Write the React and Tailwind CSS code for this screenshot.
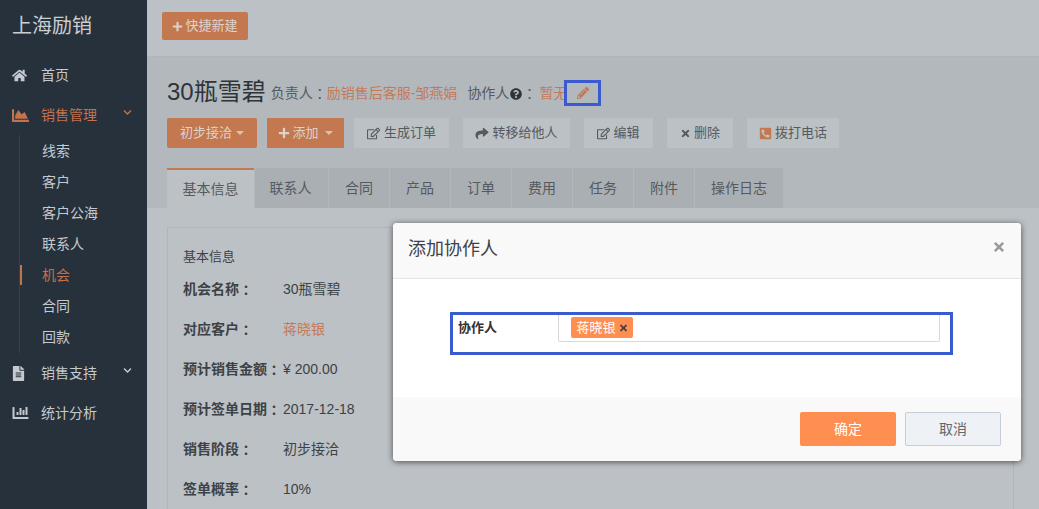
import {
  FaHome,
  FaChartArea,
  FaFileAlt,
  FaChartBar,
  FaPlus,
  FaPencilAlt,
  FaRegEdit,
  FaShare,
  FaTimes,
  FaQuestionCircle,
  FaPhoneSquareAlt,
  FaChevronDown,
} from "react-icons/fa";

const subItems = ["线索", "客户", "客户公海", "联系人", "机会", "合同", "回款"];

const tabs = [
  { name: "联系人", width: "w-[73px] pr-[2px]" },
  { name: "合同", width: "w-[60px]" },
  { name: "产品", width: "w-[60px]" },
  { name: "订单", width: "w-[60px]" },
  { name: "费用", width: "w-[60px]" },
  { name: "任务", width: "w-[60px]" },
  { name: "附件", width: "w-[60px]" },
  { name: "操作日志", width: "w-[88px]" },
];

const infoRows = [
  { label: "机会名称", value: "30瓶雪碧" },
  { label: "对应客户", value: "蒋晓银", link: true },
  { label: "预计销售金额", value: "¥ 200.00" },
  { label: "预计签单日期", value: "2017-12-18" },
  { label: "销售阶段", value: "初步接洽" },
  { label: "签单概率", value: "10%" },
];

// TC face draws the full-width colon centred, like the reference
const Colon = () => <span className="font-['Noto_Sans_CJK_TC',sans-serif]">：</span>;

const Caret = () => (
  <span className="ml-[4px] inline-block border-x-[4px] border-t-[4px] border-x-transparent border-t-[#d9c3b5]" />
);

const GrayButton = ({ width, gap = "gap-[3px]", icon, children }) => (
  <button className={`flex h-[30px] items-center justify-center bg-[#bcc1c5] text-[13px] text-[#555a5e] ${gap} ${width}`}>
    {icon}
    {children}
  </button>
);

const Sidebar = () => (
  <aside className="flex h-full w-[147px] shrink-0 flex-col bg-[#27313c] text-[14px] text-[#c5cad0]">
    <div className="flex h-[52px] items-center pl-[12px] text-[20px] text-[#c9ced3]">上海励销</div>
    <div className="mt-[3px] flex h-[40px] items-center pl-[12px]">
      <FaHome className="h-[15px] w-[15px]" />
      <span className="ml-[14px]">首页</span>
    </div>
    <div className="flex h-[40px] items-center pl-[12px] text-[#c2724c]">
      <FaChartArea className="h-[17px] w-[17px]" />
      <span className="ml-[12px]">销售管理</span>
      <FaChevronDown className="ml-[26px] mb-[6px] h-[9px] w-[9px]" />
    </div>
    <ul className="ml-[19px] border-l border-[#36414c] pt-[1px]">
      {subItems.map((item) => (
        <li
          key={item}
          className={`relative flex h-[31px] items-center pl-[22px] ${item === "机会" ? "text-[#c2724c]" : ""}`}
        >
          {item === "机会" && <span className="absolute left-0 top-[5px] h-[20px] w-[2px] bg-[#c2724c]" />}
          {item}
        </li>
      ))}
    </ul>
    <div className="flex h-[40px] items-center pl-[12px]">
      <FaFileAlt className="h-[15px] w-[13px]" />
      <span className="ml-[16px]">销售支持</span>
      <FaChevronDown className="ml-[26px] mb-[6px] h-[9px] w-[9px]" />
    </div>
    <div className="flex h-[40px] items-center pl-[12px]">
      <FaChartBar className="h-[16px] w-[17px]" />
      <span className="ml-[12px]">统计分析</span>
    </div>
  </aside>
);

const Main = () => (
  <main className="h-full min-w-0 flex-1 bg-[#bcc1c5]">
    <div className="flex h-[57px] items-start border-b border-[#b0b5b9] pl-[15px] pt-[12px]">
      <button className="flex h-[28px] w-[86px] items-center justify-center gap-[2px] rounded-[2px] bg-[#c3784f] text-[13px] text-[#dcd3cb]">
        <FaPlus className="h-[11px] w-[11px]" />
        快捷新建
      </button>
    </div>

    <div className="h-[151px] bg-[#b3b8bc] pl-[20px]">
      <div className="relative flex h-[61px] items-center pt-[8px] text-[#555a5e]">
        <span className="text-[24px] text-[#2f3438]">30瓶雪碧</span>
        <span className="ml-[5px] mt-[4px] flex text-[14px]">
          负责人
          <Colon />
        </span>
        <span className="mt-[4px] text-[14px] text-[#c47a58]">励销售后客服-邹燕娟</span>
        <span className="ml-[10px] mt-[4px] flex items-center text-[14px]">
          协作人
          <FaQuestionCircle className="ml-[1px] h-[12px] w-[12px] text-[#2f3438]" />
          <Colon />
        </span>
        <span className="ml-[3px] mt-[4px] text-[14px] text-[#c47a58]">暂无</span>
        <span className="absolute left-[397px] top-[23px] flex h-[26px] w-[37px] items-center justify-center border-[3px] border-[#3a5bd0]">
          <FaPencilAlt className="h-[12px] w-[12px] text-[#c3784f]" />
        </span>
      </div>

      <div className="flex">
        <button className="flex h-[30px] w-[90px] items-center justify-center rounded-[2px] bg-[#c3784f] text-[13px] text-[#dcd3cb]">
          初步接洽
          <Caret />
        </button>
        <button className="ml-[10px] flex h-[30px] w-[77px] items-center justify-center gap-[2px] bg-[#c3784f] text-[13px] text-[#dcd3cb]">
          <FaPlus className="h-[12px] w-[12px]" />
          添加
          <Caret />
        </button>
        <div className="ml-[10px]">
          <GrayButton width="w-[95px]" gap="gap-[4px]" icon={<FaRegEdit className="h-[13px] w-[13px]" />}>
            生成订单
          </GrayButton>
        </div>
        <div className="ml-[14px]">
          <GrayButton width="w-[107px]" icon={<FaShare className="h-[13px] w-[14px]" />}>
            转移给他人
          </GrayButton>
        </div>
        <div className="ml-[14px]">
          <GrayButton width="w-[69px]" icon={<FaRegEdit className="h-[13px] w-[13px]" />}>
            编辑
          </GrayButton>
        </div>
        <div className="ml-[14px]">
          <GrayButton width="w-[66px]" icon={<FaTimes className="h-[11px] w-[11px]" />}>
            删除
          </GrayButton>
        </div>
        <div className="ml-[14px]">
          <GrayButton width="w-[92px]" icon={<FaPhoneSquareAlt className="h-[13px] w-[13px] text-[#c3784f]" />}>
            拨打电话
          </GrayButton>
        </div>
      </div>

      <div className="mt-[20px] flex h-[40px] gap-[1px] text-[14px] text-[#555a5e]">
        <div className="flex h-[40px] w-[87px] items-center justify-center border-t-2 border-[#c3784f] bg-[#bcc1c5]">
          基本信息
        </div>
        {tabs.map((tab) => (
          <div key={tab.name} className={`flex h-[40px] items-center justify-center bg-[#aaafb3] ${tab.width}`}>
            {tab.name}
          </div>
        ))}
      </div>
    </div>

    <section className="ml-[20px] mr-[25px] mt-[19px] h-[400px] border border-[#b0b5b9] pl-[15px] pt-[20px] text-[14px] text-[#3d4246]">
      <h3 className="h-[21px] text-[13px] leading-[17px]">基本信息</h3>
      {infoRows.map((row) => (
        <div key={row.label} className="flex h-[40px] items-center">
          <span className="flex w-[100px] shrink-0 whitespace-nowrap font-bold">
            {row.label}
            <Colon />
          </span>
          <span className={row.link ? "text-[#c47a58]" : ""}>{row.value}</span>
        </div>
      ))}
    </section>
  </main>
);

const CollaboratorModal = () => (
  <div className="absolute left-[393px] top-[223px] w-[628px] overflow-hidden rounded-[4px] bg-white shadow-[0_1px_6px_rgba(0,0,0,0.6)]">
    <div className="flex h-[56px] items-center justify-between border-b border-[#e5e5e5] bg-[#f9f9f9] pl-[15px] pr-[15px] pb-[2px]">
      <span className="text-[18px] text-[#3d4246]">添加协作人</span>
      <FaTimes className="mb-[6px] h-[14px] w-[14px] text-[#9a9a9a]" />
    </div>
    <div className="h-[118px] pl-[57px] pt-[33px]">
      <div className="flex h-[43px] w-[503px] border-[3px] border-[#3a5bd0]">
        <span className="w-[105px] pl-[5px] pt-[3px] text-[13px] font-bold text-[#333333]">协作人</span>
        <div className="flex h-[27px] w-[382px] items-start rounded-b-[2px] border-x border-b border-[#d8d8d8] pl-[12px] pt-[2px]">
          <span className="flex h-[21px] w-[62px] items-center justify-center gap-[3px] rounded-[2px] bg-[#ff8f50] text-[13px] text-white">
            蒋晓银
            <FaTimes className="h-[10px] w-[9px] text-[#444444]" />
          </span>
        </div>
      </div>
    </div>
    <div className="flex h-[64px] justify-end gap-[9px] bg-[#f9f9f9] pr-[20px] pt-[15px] text-[14px]">
      <button className="h-[34px] w-[96px] rounded-[2px] bg-[#ff8f50] text-white">确定</button>
      <button className="h-[34px] w-[96px] rounded-[2px] border border-[#c5ced6] bg-[#eef1f6] text-[#666666]">取消</button>
    </div>
  </div>
);

const App = () => (
  <div className="relative flex h-[509px] w-[1039px] overflow-hidden font-['Liberation_Sans','Noto_Sans_CJK_SC',sans-serif]">
    <Sidebar />
    <Main />
    <CollaboratorModal />
  </div>
);

export default App;
